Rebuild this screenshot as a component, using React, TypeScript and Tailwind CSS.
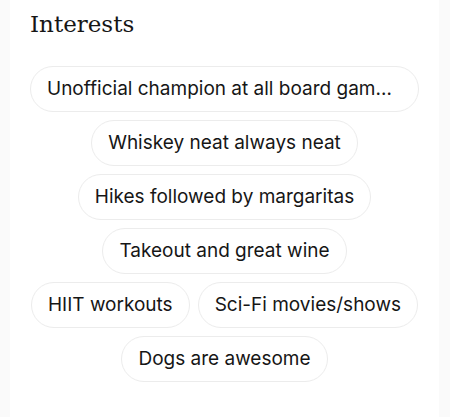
const interests = [
  "Unofficial champion at all board games and card games",
  "Whiskey neat always neat",
  "Hikes followed by margaritas",
  "Takeout and great wine",
  "HIIT workouts",
  "Sci-Fi movies/shows",
  "Dogs are awesome",
];

export default function App() {
  return (
    <div className="min-h-[417px] w-[450px] bg-[#fafafa] pl-[10px] flex">
      <div className="w-[429px] shrink-0 bg-white px-5 pt-[8px] pb-8">
        <h2
          className="text-[23px] leading-[32px] text-[#161616]"
          style={{ fontFamily: '"DejaVu Serif", serif' }}
        >
          Interests
        </h2>
        <ul className="mt-[26px] flex flex-wrap justify-center gap-2">
          {interests.map((item) => (
            <li
              key={item}
              className="max-w-full min-w-0 h-[46px] flex items-center rounded-full border border-[#ececec] px-4 text-[19px] text-[#161616]"
              style={{ fontFamily: '"Inter", sans-serif' }}
            >
              <span className="truncate">{item}</span>
            </li>
          ))}
        </ul>
      </div>
    </div>
  );
}
